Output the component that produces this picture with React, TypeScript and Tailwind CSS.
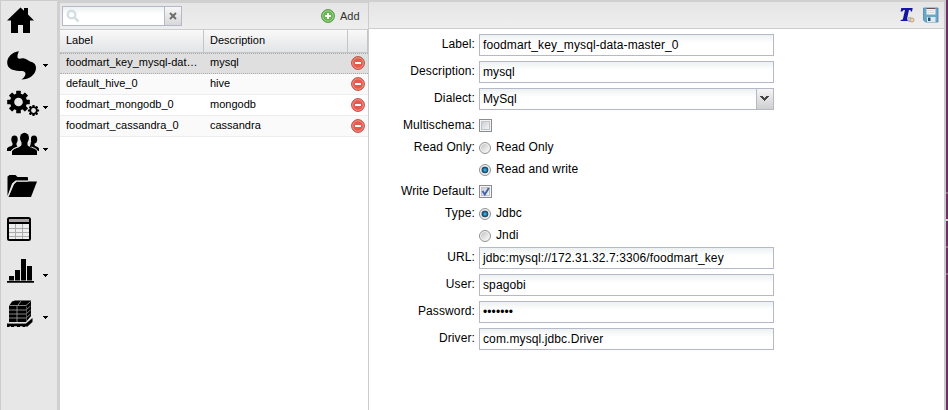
import React from 'react';

const Caret = () => <path d="M43 22h5v1h-1v1h-1v1h-1v-1h-1v-1h-1z" fill="#000" />;

function Slot({ children, caret }: { children: React.ReactNode; caret?: boolean }) {
  return (
    <svg className="block h-[42px] w-[56px] shrink-0" viewBox="1 0 56 42">
      {children}
      {caret && <Caret />}
    </svg>
  );
}

function Gear({ cx, cy, r, hole, w, t }: { cx: number; cy: number; r: number; hole: number; w: number; t: number }) {
  return (
    <g transform={`translate(${cx} ${cy})`}>
      {[0, 45, 90, 135].map((a) => (
        <rect key={a} x={-w / 2} y={-t} width={w} height={t * 2} rx="0.5" transform={`rotate(${a})`} />
      ))}
      <circle r={r} />
      <circle r={hole} fill="#e7e7e7" />
    </g>
  );
}

function Sidebar() {
  return (
    <nav className="flex w-[60px] shrink-0 flex-col border-l border-r-[3px] border-t border-l-[#ccc] border-r-[#d0d0d0] border-t-[#ccc] bg-[#e7e7e7]">
      <div className="-mt-px flex flex-col">
        <Slot>
          <path d="M7 20.5 20.5 7.500 24 10.800V8h4v6.500l6 6H30V33h-7v-8h-5v8h-7V20.500z" />
        </Slot>
        <Slot caret>
          <path d="M19 9.200C12 10 7.500 15 7.200 20c-.1 4 2 6.500 5.300 7.800 3 1.100 6.500 1.400 10 1.300 2.500.3 3.500 2.200 2.800 4-.7 2-2 3.200-3.800 4.500C29 37.500 35.500 33 36 26.500c.1-4-2-6-5.300-6.700-2-.4-3.700-3-7.200-3.500-2-.3-3.500.7-5 .3-1.700-1.100-1-4.600.5-7.400z" />
        </Slot>
        <Slot caret>
          <Gear cx={18.500} cy={18} r={8.500} hole={4.300} w={4.600} t={11.300} />
          <Gear cx={33.500} cy={26.500} r={4.200} hole={2.400} w={2.200} t={5.600} />
        </Slot>
        <Slot caret>
          <ellipse cx="14.500" cy="13.500" rx="3.200" ry="4" />
          <path d="M7 25v-2.500c1-2 4.500-2 5.500-3.500v-3h4v3l1 1.500L12 23.500 11 25z" />
          <ellipse cx="34" cy="13.500" rx="3.200" ry="4" />
          <path d="M39 25v-2.500c-1-2-4-2-4.500-3.500v-3h-4v3l-1 1.500 5.500 3L36 25z" />
          <ellipse cx="24.500" cy="12" rx="4.500" ry="5.200" />
          <path d="M12 29v-4c1.500-3 8-3 9.500-6v-4h6v4c1.500 3 8 3 9.500 6v4z" />
          <path d="M18.500 12c0 5 .5 6 2 7.500M30.500 12c0 5-.5 6-2 7.500M11.500 25c1-2.500 4-3 6-4M37.500 25c-1-2.500-4-3-6-4" fill="none" stroke="#e7e7e7" />
        </Slot>
        <Slot>
          <path d="M7.500 28V8.500l2-1.500h6l2 2H27a1 1 0 0 1 1 1v2.500H15.500L12 15.500z" />
          <path d="M8.500 29 14 16l3-2.500h20L31 29z" />
          <path d="M8.500 27.500 13.500 16l3-2.700H28" fill="none" stroke="#e7e7e7" strokeWidth=".8" />
        </Slot>
        <Slot>
          <rect x="8" y="8" width="22" height="22" rx="1.500" fill="#eee" stroke="#000" strokeWidth="2" />
          <path d="M9 9h20v3H9z" fill="#aaa3a3" />
          <path d="M8 13h22" stroke="#000" strokeWidth="2" />
          <path d="M9 18.500h20M9 22.500h20M9 26.500h20M15.500 14v15M22.500 14v15" stroke="#aaa" />
        </Slot>
        <Slot caret>
          <path d="M7 29h27v1.700H7zM9 24h5v4.500H9zM15 18h5v10.500h-5zM21 7h5v21.500h-5zM27 14h5v14.500h-5z" />
        </Slot>
        <Slot caret>
          <path d="M9 12l3-4.500 3-1h16V22l-5 6H9z" />
          <path d="M7 29.500h19l6.500-5.500v4L28 32v.5h-3V33h-2.500v-.8H20v.8h-3v-.8h-3v.8h-3v-.8H9.500v.8H7z" />
          <path d="M9 16h17l4.500-4M9 20h17l4.500-4M9 24h17l4.500-4M9.500 11.500H26l4.500-4M17 28V12.500l4-5.500" fill="none" stroke="#a5a5a5" strokeWidth=".8" />
          <path d="M26.500 12.500V28" stroke="#666" strokeWidth=".8" />
          <path d="M8 28.700h18l5-5" fill="none" stroke="#ddd" />
        </Slot>
      </div>
    </nav>
  );
}

function CircleIcon({ add }: { add?: boolean }) {
  return (
    <svg className="block size-[14px] shrink-0" viewBox="0 0 14 14">
      <circle cx="7" cy="7" r="6.400" fill={add ? '#67b54e' : '#e65a4d'} stroke={add ? '#4a9139' : '#c04a42'} />
      <circle cx="7" cy="7" r="5.300" fill="none" stroke={add ? '#a5d995' : '#f29a8c'} strokeWidth=".9" />
      <path d={add ? 'M7 4v6M4 7h6' : 'M4 7h6'} stroke="#fff" strokeWidth="2" />
    </svg>
  );
}

const sources = [
  ['foodmart_key_mysql-dat…', 'mysql'],
  ['default_hive_0', 'hive'],
  ['foodmart_mongodb_0', 'mongodb'],
  ['foodmart_cassandra_0', 'cassandra'],
];
const rowStyles = [
  'border-y border-dotted border-[#aaa] bg-[#dfdfdf] pb-px',
  'border-b border-[#ededed] bg-[#fafafa]',
  'border-b border-[#ededed] bg-white',
  'border-b border-[#ededed] bg-[#fafafa]',
];

function SourceList() {
  return (
    <section className="flex w-[309px] shrink-0 flex-col border-r border-t-[3px] border-r-[#ccc] border-t-[#d0d0d0] bg-white text-[11px]">
      <div className="flex h-[27px] shrink-0 items-start border-b border-[#ccc] bg-linear-to-b from-[#e5e5e5] to-[#eeeeee] pl-[2px] pt-[3px]">
        <div className="flex h-5 w-[103px] border border-[#b5b8c8] bg-linear-to-b from-[#edf1f1] to-white to-40%">
          <svg className="ml-[3px] mt-[2px] size-[14px]" viewBox="0 0 14 14">
            <circle cx="5.500" cy="5.500" r="3.800" fill="none" stroke="#d5dfe3" strokeWidth="2.400" />
            <path d="m8.500 8.500 4 4" stroke="#d5dfe3" strokeWidth="2.500" />
          </svg>
        </div>
        <div className="flex h-5 w-[17px] items-center justify-center border border-l-0 border-[#b5b8c8] bg-linear-to-b from-[#f7f7f7] to-[#d8d8d8]">
          <svg className="size-[8px]" viewBox="0 0 8 8"><path d="m1 1 6 6m0-6L1 7" stroke="#6b6b6b" strokeWidth="1.900" /></svg>
        </div>
        <div className="ml-[139px] mt-[2px] flex items-center gap-[5px]">
          <CircleIcon add />
          <span className="leading-[16px] text-[#333]">Add</span>
        </div>
      </div>
      <div className="flex h-[23px] shrink-0 border-b border-[#c5c5c5] bg-linear-to-b from-[#f9f9f9] to-[#e3e4e6] leading-[21px]">
        <div className="w-[144px] border-r border-[#c5c5c5] pl-1.5">Label</div>
        <div className="w-[144px] border-r border-[#c5c5c5] pl-1.5">Description</div>
        <div className="w-5 border-r border-[#c5c5c5]" />
      </div>
      {sources.map(([name, description], i) => (
        <div key={name} className={`flex h-[21px] shrink-0 items-start ${rowStyles[i]}`}>
          <div className={`w-[144px] whitespace-nowrap pl-1.5 ${i ? 'leading-[19px]' : 'leading-[17px]'}`}>{name}</div>
          <div className={`w-[147px] pl-1.5 ${i ? 'leading-[19px]' : 'leading-[17px]'}`}>{description}</div>
          <div className={i ? 'pt-[3px]' : 'pt-[2px]'}><CircleIcon /></div>
        </div>
      ))}
    </section>
  );
}

function Label({ children }: { children?: React.ReactNode }) {
  return <div className="w-[106px] shrink-0 text-right">{children}</div>;
}

function TextRow({ label, value, select }: { label: string; value: string; select?: boolean }) {
  return (
    <div className="flex h-[27px] gap-1 leading-5">
      <Label>{label}:</Label>
      <div className="flex h-[22px] w-[295px] justify-between border border-[#b5b8c8] bg-linear-to-b from-[#edf1f1] to-white to-40% pl-[3px]">
        <span className="leading-[20px]">{value}</span>
        {select && (
          <span className="flex w-[17px] items-center justify-center border-l border-[#b5b8c8] bg-linear-to-b from-[#f5f5f5] to-[#cfcfcf] pr-px">
            <svg className="mb-[1px] h-[6px] w-[9px] shrink-0" viewBox="0 0 9 6"><path d="M0 0h3v1h1v1h1V1h1V0h3v1H8v1H7v1H6v1H5v1H4V4H3V3H2V2H1V1H0z" fill="#444" /></svg>
          </span>
        )}
      </div>
    </div>
  );
}

function Check({ on }: { on?: boolean }) {
  return (
    <svg className="size-[13px] shrink-0" viewBox="0 0 13 13">
      <defs>
        <linearGradient id="box" x2="1" y2="1"><stop stopColor="#c9ccd3" /><stop offset="1" stopColor="#f7f7f7" /></linearGradient>
      </defs>
      <rect x=".5" y=".5" width="12" height="12" fill="#f4f4f4" stroke="#8b8d91" />
      <rect x="2.500" y="2.500" width="8" height="8" fill="url(#box)" stroke="#bfc3ca" />
      {on && <path d="m3.500 6 2.300 3.500L9.800 3" fill="none" stroke="#4664a6" strokeWidth="2" />}
    </svg>
  );
}

function Radio({ on }: { on?: boolean }) {
  return (
    <svg className="mt-[2px] size-[12px] shrink-0" viewBox="0 0 12 12">
      <defs>
        <linearGradient id="dial" x2="1" y2="1"><stop stopColor="#c4c4c4" /><stop offset="1" stopColor="#fafafa" /></linearGradient>
        <radialGradient id="dot"><stop stopColor="#5bc1e8" /><stop offset=".45" stopColor="#2383b4" /><stop offset="1" stopColor="#14324e" /></radialGradient>
      </defs>
      <circle cx="6" cy="6" r="5.500" fill="#f3f3f3" stroke="#8e8f8f" />
      <circle cx="6" cy="6" r="4" fill="url(#dial)" />
      {on && <circle cx="6" cy="6" r="3.300" fill="url(#dot)" />}
    </svg>
  );
}

function OptionRow({ label, option, on }: { label?: string; option: string; on?: boolean }) {
  return (
    <div className="flex h-[22px] items-center gap-1">
      <Label>{label}</Label>
      <Radio on={on} />
      <span className="ml-px">{option}</span>
    </div>
  );
}

function Details() {
  return (
    <main className="flex w-[575px] shrink-0 flex-col border-t-2 border-[#d0d0d0] bg-white">
      <div className="flex h-[27px] shrink-0 items-center justify-end gap-[8px] border-b border-[#ccc] bg-linear-to-b from-[#e5e5e5] to-[#eeeeee] pr-[5px]">
        <svg className="size-[16px]" viewBox="0 0 16 16">
          <path d="M2.300 1h11.400l-.7 3.500h-1.300l-.2-1.500H10L7.900 12.500l1.600.4-.3 1.100H1.500l.3-1.100 2-.4L6 3H4.700L3.200 4.500H1.600z" fill="#1615a2" />
          <circle cx="10.700" cy="12.500" r="2" fill="#d0d4dc" stroke="#9aa2b8" />
          <circle cx="13" cy="13" r="2" fill="#ead8b6" stroke="#c59f74" />
        </svg>
        <svg className="size-[16px]" viewBox="0 0 16 16">
          <path d="M.5 1H15v14H2.500L.5 13z" fill="#68a8c8" stroke="#4a87a8" strokeWidth=".8" />
          <path d="M3.500 1h9v6.500h-9z" fill="#f3f4f2" />
          <path d="M3.500 1h9v1h-9z" fill="#6d4b54" />
          <path d="M4.500 3.500h7M4.500 5.500h7" stroke="#d8dcdc" />
          <path d="M4 10h8.500v5H4z" fill="#deeaf0" />
          <path d="M5 10.500h2.500V14H5z" fill="#265475" />
        </svg>
      </div>
      <form className="flex flex-col pt-[5px] text-[12px] leading-[20px] tracking-[0.11px]">
        <TextRow label="Label" value="foodmart_key_mysql-data-master_0" />
        <TextRow label="Description" value="mysql" />
        <TextRow label="Dialect" value="MySql" select />
        <div className="flex h-[21px] items-start gap-1">
          <Label>Multischema:</Label>
          <div className="pt-1"><Check /></div>
        </div>
        <OptionRow label="Read Only:" option="Read Only" />
        <OptionRow option="Read and write" on />
        <div className="flex h-[22px] items-center gap-1"><Label>Write Default:</Label><Check on /></div>
        <OptionRow label="Type:" option="Jdbc" on />
        <OptionRow option="Jndi" />
        <div className="pt-px">
          <TextRow label="URL" value="jdbc:mysql://172.31.32.7:3306/foodmart_key" />
          <TextRow label="User" value="spagobi" />
          <TextRow label="Password" value="•••••••" />
          <TextRow label="Driver" value="com.mysql.jdbc.Driver" />
        </div>
      </form>
    </main>
  );
}

export default function App() {
  return (
    <div className="flex h-[410px] w-[948px] overflow-hidden bg-white font-['Liberation_Sans',Arial,sans-serif] text-black">
      <Sidebar />
      <SourceList />
      <Details />
      <div className="w-[2px] shrink-0 bg-[#cacaca]" />
      <div className="flex w-[2px] shrink-0 flex-col bg-[#702d68] pt-[192px]">
        <div className="mb-[25px] h-[2px] bg-[#966590]" />
        <div className="mb-[25px] h-[2px] bg-[#e0d0df]" />
        <div className="mb-[25px] h-[2px] bg-[#966590]" />
        <div className="h-[2px] bg-[#966590]" />
      </div>
    </div>
  );
}
